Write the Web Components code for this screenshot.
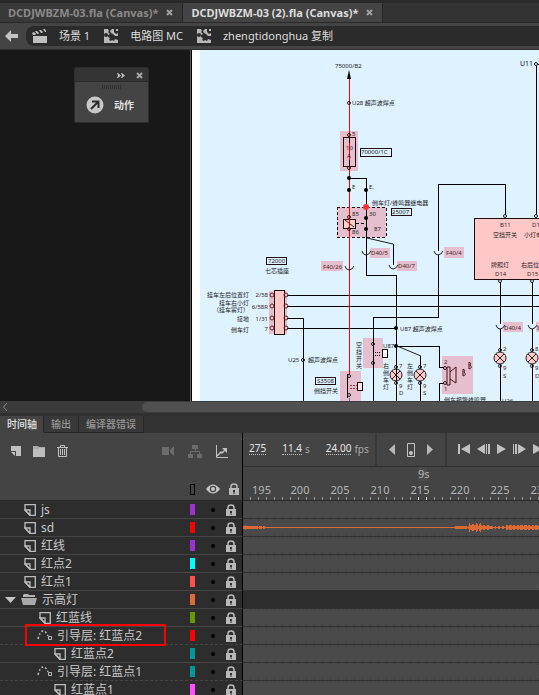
<!DOCTYPE html>
<html lang="zh-CN">
<head>
<meta charset="utf-8">
<title>DCDJWBZM-03 (2).fla (Canvas)</title>
<style>
html, body { height: 100%; margin: 0; }
body { background: #2d2d2d; color: #d6d6d6; overflow: hidden; font-family: "Noto Sans", "Noto Sans CJK SC", sans-serif; }
</style>
</head>
<body>
<animate-app></animate-app>
<script>
const RESET = `
*, *::before, *::after { box-sizing: border-box; }
button { appearance: none; background: none; border: 0; padding: 0; margin: 0; color: inherit; font: inherit; display: flex; align-items: center; justify-content: center; }
svg { display: block; }
`;
function define(name, css, html) {
  customElements.define(name, class extends HTMLElement {
    constructor() {
      super();
      this.attachShadow({ mode: 'open' });
    }
    connectedCallback() {
      const body = typeof html === 'function' ? html(this) : html;
      this.shadowRoot.innerHTML = `<style>${RESET}${css}</style>${body}`;
    }
  });
}

/* ---------- icons ---------- */
const ICONS = {
  back: [13, 12, '<path fill="#c4c4c4" d="M0 6 6 0V4H13V8H6V12Z"/>'],
  clapper: [15, 15, '<path fill="#c0c0c0" d="M1 7H15V14H1Z"/><path fill="#c0c0c0" d="M0 4 2 3 4 5 3 6 1 6ZM3 2 5 2 7 4 6 5 5 5ZM7 1 9 1 11 3 10 4 9 4ZM11 0 13 0 14 2 14 3 13 3Z"/>'],
  symbol: [14, 14, '<path fill="#b8b8b8" d="M0 0H4L5 2 4 3 6 5 4 6V8L6 9 5 11 7 12 8 11 10 12 11 10 14 11V14H0Z"/><path fill="#b8b8b8" d="M8 0H10L10 3 12 5 14 4V7L11 7 9 5 7 4 6 2Z"/><circle cx="2" cy="6" r="2" fill="#2b2b2b"/><path fill="#b8b8b8" d="M12 0H14V2H12Z"/>'],
  close: [7, 7, '<path stroke="currentColor" stroke-width="2" d="M1 1 6 6M6 1 1 6"/>'],
  expand: [8, 5, '<path fill="#bdbdbd" d="M0 0H1L4 2.500 1 5H0L1 2.500ZM4 0H5L8 2.500 5 5H4L5 2.500Z"/>'],
  actions: [18, 18, '<circle cx="9" cy="9" r="8.500" fill="#c8c8c8"/><path fill="none" stroke="#2c2c2c" stroke-width="2" d="M5 13 12 6M6 5.500H12.500V12"/>'],
  newlayer: [10, 10, '<path fill="#c0c0c0" d="M0 0H10V10H5V5H0Z"/><path fill="#c0c0c0" d="M0 6H4V10Z"/>'],
  newfolder: [12, 11, '<path fill="#aaa" d="M0 0H5L6 1H12V2H5L4 3H0Z"/><path fill="#bdbdbd" d="M0 3H4L5 2H12V11H0Z"/>'],
  trash: [11, 12, '<path fill="none" stroke="#c0c0c0" d="M0 2.500H11M3.500 2V.5H7.500V2M1.500 3V11.500H9.500V3M3.500 4V10M5.500 4V10M7.500 4V10"/>'],
  camera: [12, 10, '<path fill="#6c6c6c" d="M0 1H7V9H0ZM8 4 12 0V10L8 6Z"/>'],
  tree: [14, 13, '<path fill="#6c6c6c" d="M4 0H10V4H4ZM0 9H5V13H0ZM9 9H14V13H9Z"/><path fill="none" stroke="#6c6c6c" d="M7.500 4V6.500M2.500 9V6.500H11.500V9"/>'],
  graph: [12, 13, '<path fill="none" stroke="#c0c0c0" d="M.5 0V12.500H12"/><path fill="none" stroke="#c0c0c0" stroke-width="1.500" d="M1 11 5 7 6 8 10 4"/><path fill="#c0c0c0" d="M6 3H11V8Z"/>'],
  eye: [14, 10, '<path fill="#c6c6c6" d="M0 5Q7-4 14 5 7 14 0 5Z"/><circle cx="7" cy="5" r="3.200" fill="#444"/><circle cx="7" cy="5" r="2" fill="#c6c6c6"/>'],
  lock: [10, 12, '<path fill="none" stroke="#b9b9b9" stroke-width="1.500" d="M2 6V3.500Q2 1 5 1T8 3.500V6"/><path fill="#b9b9b9" d="M0 5H10V12H0Z"/><path fill="#333" d="M4 7H6V9H5.500V11H4.500V9H4Z"/>'],
  layer: [12, 12, '<path fill="none" stroke="#bdbdbd" stroke-width="1.300" d="M1 6V.7H11.300V11.300H6Z"/><path fill="none" stroke="#bdbdbd" stroke-width="1.300" d="M1 6H6V11.300Z"/>'],
  folder: [16, 11, '<path fill="#b4b4b4" d="M2 3V1L3 0H7L8 1H14V3Z"/><path fill="#a9a9a9" d="M0 4H16L14 11H2Z"/>'],
  guide: [15, 11, '<path fill="none" stroke="#bdbdbd" stroke-width="1.500" stroke-dasharray="2 2" d="M1 9Q3 1 6 1T11 6"/><path fill="none" stroke="#bdbdbd" d="M11.500 6.500H14.500V9.500H11.500Z"/>'],
  caret: [11, 6, '<path fill="#c4c4c4" d="M0 0H11L5.500 6Z"/>'],
  chevron: [4, 8, '<path fill="none" stroke="#858585" d="M4 0 .5 4 4 8"/>'],
  prev: [6, 11, '<path fill="#b8b8b8" d="M6 0V11L0 5.500Z"/>'],
  next: [6, 11, '<path fill="#b8b8b8" d="M0 0V11L6 5.500Z"/>'],
  key: [8, 14, '<path fill="none" stroke="#c4c4c4" d="M.5.5H7.500V13.500H.5Z"/><circle cx="4" cy="10" r="2" fill="#c4c4c4"/>'],
  first: [12, 10, '<path fill="#c0c0c0" d="M0 0H2V10H0ZM12 0V10L3 5Z"/>'],
  stepback: [13, 10, '<path fill="#c0c0c0" d="M8 0V10L0 5ZM9 0H10V10H9ZM11 0H13V10H11Z"/>'],
  play: [9, 10, '<path fill="#c0c0c0" d="M0 0 9 5 0 10Z"/>'],
  stepnext: [13, 10, '<path fill="#c0c0c0" d="M0 0H1V10H0ZM2 0H4V10H2ZM5 0 13 5 5 10Z"/>'],
  last: [12, 10, '<path fill="#c0c0c0" d="M0 0 9 5 0 10ZM10 0H12V10H10Z"/>']
};
define('app-icon', ':host{display:block;flex:none}', el => {
  const [w, h, art] = ICONS[el.getAttribute('name')];
  return `<svg width="${w}" height="${h}" viewBox="0 0 ${w} ${h}" aria-hidden="true">${art}</svg>`;
});

/* ---------- document tabs ---------- */
define('doc-tab', `
:host{display:flex;align-items:center;height:19px;padding:0 9px 0 8px;gap:8px;background:#393939;color:#8c8989;border-right:1px solid #262626;font-weight:700;font-size:11px;line-height:19px;white-space:nowrap}
:host([active]){background:#444;color:#dcdcdc}
button{color:#a0a0a0}`,
`<span><slot></slot></span><button aria-label="关闭"><app-icon name="close"></app-icon></button>`);
define('doc-tabs', ':host{display:flex;background:#333;border-top:3px solid #292929;border-bottom:1px solid #292929;height:23px;overflow:hidden}', '<slot></slot>');

/* ---------- breadcrumb ---------- */
define('crumb-item', `
:host{display:flex;align-items:center;gap:12px;font-size:11px;color:#dedede;white-space:nowrap}
a{color:inherit;text-decoration:none;line-height:20px}`,
el => `<app-icon name="${el.getAttribute('icon')}"></app-icon><a href="#"><slot></slot></a>`);
define('crumb-bar', `
:host{display:flex;align-items:center;height:27px;gap:8px;padding-left:5px;background:#444;border-bottom:1px solid #303030}
nav{display:flex;flex:1;align-items:center;gap:14px;height:20px;padding-left:6px;background:#2b2b2b;border-radius:8px 0 0 8px}`,
`<button aria-label="返回"><app-icon name="back"></app-icon></button><nav><slot></slot></nav>`);

/* ---------- floating actions panel ---------- */
define('actions-panel', `
:host{display:block;width:75px;background:#444;border:1px solid #2c2c2c;border-radius:3px 3px 0 0}
header{display:flex;align-items:center;justify-content:flex-end;gap:11px;height:14px;padding:1px 5px 0 0;background:#343434;border-bottom:1px solid #2a2a2a;color:#a6a6a6}
.grip{width:19px;height:4px;margin:3px auto 7px;background:repeating-linear-gradient(90deg,#303030 0 1px,transparent 1px 2px)}
.act{gap:10px;padding:0 0 8px 11px;font-size:10px;font-weight:700;color:#e2e2e2;line-height:18px}`,
`<header><button aria-label="展开"><app-icon name="expand"></app-icon></button><button aria-label="关闭"><app-icon name="close"></app-icon></button></header>
<div class="grip"></div><button class="act"><app-icon name="actions"></app-icon><span>动作</span></button>`);

/* ---------- circuit drawing ---------- */
const T = (x, y, s, o = '') => `<text x="${x}" y="${y}" ${o}>${s}</text>`;
const V = (x, ys, s) => [...s].map((c, i) => T(x, ys[i], c)).join('');
const L = (d, o = '') => `<path class="w" d="${d}" ${o}/>`;
const P = (x, y, w, h) => `<rect class="p" x="${x}" y="${y}" width="${w}" height="${h}"/>`;
const B = (x, y, w, h, o = 'fill="none"') => `<rect class="b" x="${x}" y="${y}" width="${w}" height="${h}" ${o}/>`;
const O = (x, y) => `<circle class="o" cx="${x}" cy="${y}" r="1.500"/>`;
const D = (x, y) => `<circle cx="${x}" cy="${y}" r="2"/>`;
const CUP = (x, y) => `<path class="c" d="M${x - 4} ${y - 2}Q${x - 3} ${y + 2} ${x} ${y + 2}T${x + 5} ${y - 2}"/>`;
const LAMP = (x, y) => `<circle cx="${x}" cy="${y}" r="6" fill="#ffc8c8" stroke="#222"/><path class="c" d="M${x - 4} ${y - 4}L${x + 4} ${y + 4}M${x + 4} ${y - 4}L${x - 4} ${y + 4}"/>${O(x, y - 8)}${O(x, y + 8)}`;
const drawing = [
  P(340,131,18,40), P(337,207,49,30), P(370,248,20,10), P(397,261,20,10), P(444,247,20,11), P(321,261,22,10),
  P(269,291,18,43), P(340,371,21,30), P(363,338,20,30), P(442,356,31,38), P(503,322,20,10), P(536,322,20,10),
  B(474,218,160,61,'fill="#ffc8c8"'), B(274,290,10,44,'fill="#ffc8c8"'),
  L('M349 178H366V275H396V401'), L('M438 251V184H505V215'), L('M438 255V317H373V401'), L('M536 66V215'), L('M538 64H560'),
  L('M500 282V324M500 329V401M532 282V324M532 329V401'), L('M287 295H900M287 306H900M287 318H303V401M287 328H396'),
  L('M396 346H439V367H444M444 383H439V401'), L('M393 244V265'),
  '<path class="c" d="M367 238 393 244M397 346 421 356"/>', L('M420 356V401'),
  B(337,207,49,30,'fill="none" stroke-dasharray="3 2"'), B(343,219,12,9,'fill="#ffd2cb"'), '<path class="c" d="M345 220 354 227"/>',
  L('M356 223H366','stroke-dasharray="3 2"'),
  B(343,137,12,29),
  '<path class="r" d="M349 78V374"/>', L('M349 137V143M349 160V166'), '<path class="w" style="stroke:#3980bd" d="M349 398V401"/>',
  '<path d="M349 70 347 79H351Z"/>',
  T(335,68,'75000/B2'), O(349,103), T(352,105,'U28 超声波焊点'),
  O(349,135), O(349,168), T(352,136,'5'), T(346,150,'10'), T(347,158,'A'),
  B(360,148,31,8), T(361,154,'70000/1C'), D(349,178), D(349,190), D(366,190), T(352,189,'E'), T(369,189,'E.'),
  T(352,216,'85'), T(369,216,'30'), T(352,234,'86'), T(374,231,'87'),
  O(349,217), O(349,229), D(366,218), D(366,229), '<circle cx="366" cy="207" r="3" fill="#f33"/>',
  T(372,205,'倒车灯/蜂鸣器继电器'), B(391,208,20,7), T(392,214,'25007'),
  CUP(366,253), CUP(393,267), CUP(438,253), CUP(349,268), CUP(500,327), CUP(532,327),
  T(371,255,'D40/5','class="m"'), T(398,268,'D40/7','class="m"'), T(446,255,'F40/4','class="m"'), T(323,269,'F40/26','class="m"'), T(504,330,'D40/4','class="m"'), T(537,330,'D40/4','class="m"'),
  T(520,66,'U11','font-size="7"'), O(536,64), O(505,216), O(536,216), O(500,281), O(532,281),
  T(500,227,'B11','class="m"'), T(493,237,'空挡开关'), T(532,227,'D10','class="m"'), T(524,237,'小灯电源'),
  T(491,267,'牌照灯'), T(495,276,'D14','class="m"'), T(521,267,'右后位置灯'), T(527,276,'D15','class="m"'),
  B(266,257,20,7), T(268,263,'72000'), T(265,273,'七芯插座'),
  ...[295,306,318,328].flatMap(y => [`<circle cx="272" cy="${y}" r="2" fill="none" stroke="#622"/>`, `<circle cx="286" cy="${y}" r="2" fill="none" stroke="#622"/>`]),
  T(249,297,'挂车左后位置灯','class="e"'), T(249,305,'挂车右小灯','class="e"'), T(249,312,'（挂车雾灯）','class="e"'), T(249,321,'接地','class="e"'), T(249,332,'倒车灯','class="e"'),
  T(268,297,'2/58','class="e m"'), T(268,309,'6/58R','class="e m"'), T(268,321,'1/31','class="e m"'), T(268,331,'7','class="e m"'),
  T(288,362,'U25'), O(303,360), T(308,362,'超声波焊点'),
  B(315,377,20,7), T(317,383,'S3508'), T(314,393,'倒挡开关'),
  L('M347 374V398M373 343V364'), O(349,376), O(349,395), L('M350 385H357M350 388H357','stroke-dasharray="2 1" style="stroke:#933"'), B(357,382,5,8,'fill="#ffe4e4"'),
  V(356,[347,354,361,368],'空挡开关'), O(373,344), O(373,363), L('M375 352H381M375 355H381','stroke-dasharray="1 1"'), B(382,349,5,8,'fill="#fff"'),
  D(396,328), T(400,331,'U87 超声波焊点'), T(383,348,'U87'), D(396,346),
  LAMP(396,375), LAMP(420,375), LAMP(500,358), LAMP(532,358), L('M396 369V382'),
  V(383,[368,375,382,389],'右倒车灯'), V(407,[368,375,382,389],'左倒车灯'),
  T(399,368,'7','class="m"'), T(399,388,'9','class="m"'), T(399,395,'D','class="m"'), T(423,368,'7','class="m"'), T(423,388,'9','class="m"'), T(423,395,'S','class="m"'),
  T(503,351,'2','class="m"'), T(503,370,'9','class="m"'), T(503,378,'S','class="m"'), T(535,351,'8','class="m"'), T(535,370,'9','class="m"'), T(535,378,'D','class="m"'),
  T(444,364,'2','class="m"'), T(444,391,'1','class="m"'), O(445,368), O(445,383),
  '<path class="c" style="stroke:#411" d="M447 367H450V385H447ZM450 372 456 367V383L450 379M463 369V376M463 369Q466 370 464 372 467 375 463 376M469 362V369M469 362Q472 363 470 365 473 368 469 369"/>',
  T(444,402,'倒车报警蜂鸣器'), T(502,403,'U26')
].join('');
define('circuit-stage', `
:host{display:flex;position:relative;height:351px;background:#181818;overflow:hidden}
.paste{flex:none;width:191px;border-right:1px solid #5a5a5a}
.doc{flex:1;min-width:0;overflow:hidden;padding-left:8px;background:#fff;border-left:1px solid #000}
.doc svg{background:#def2ff}
.float{position:absolute;left:74px;top:17px}
text{font:6px "Noto Sans","Noto Sans CJK SC",sans-serif;fill:#222}
text[font-size="7"]{font-size:7px}
.e{text-anchor:end}
.m{fill:#422}
.w{fill:none;stroke:#000;stroke-width:1px;shape-rendering:crispEdges}
.r{fill:none;stroke:#f00;stroke-width:1px;shape-rendering:crispEdges}
.b{stroke:#200c0c;stroke-width:1px;shape-rendering:crispEdges}
.c{fill:none;stroke:#222;stroke-width:1px}
.o{fill:none;stroke:#222;stroke-width:1px}
.p{fill:#e6bfce}`,
`<div class="paste"></div><div class="doc"><svg width="700" height="351" viewBox="200 50 700 351" role="img" aria-label="电路图">${drawing}</svg></div><div class="float"><slot></slot></div>`);

/* ---------- scroll strip ---------- */
define('scroll-strip', `
:host{display:flex;align-items:center;height:15px;padding-left:3px;background:#3b3b3b;border-bottom:3px solid #303030}
.track{flex:1;padding-left:135px}.thumb{height:10px;background:#505050;border-radius:5px 0 0 5px}`,
`<button aria-label="向左滚动"><app-icon name="chevron"></app-icon></button><div class="track"><div class="thumb"></div></div>`);

/* ---------- panel tabs ---------- */
define('panel-tabs', `
:host{display:flex;height:17px;background:#333}
button{padding:0 7px;border-right:1px solid #272727;border-bottom:1px solid #272727;background:#393939;color:#969696;font-size:10px;font-weight:500;line-height:16px}
button.on{padding:0 6px 0 7px;background:#444;color:#e2e2e2;border-bottom-color:#444}`,
el => el.getAttribute('items').split(',').map((t, i) => `<button class="${i ? '' : 'on'}">${t}</button>`).join(''));

/* ---------- timeline head ---------- */
define('layer-tools', `
:host{display:flex;flex-direction:column;justify-content:space-between;width:243px;height:68px;background:#444;border-right:1px solid #000;border-bottom:1px solid #2a2a2a}
.row{display:flex;align-items:center}
.top{height:36px;padding:0 14px 0 11px;gap:12px}
.sp{flex:1}.end{gap:14px;display:flex}
.cols{padding:0 5px 5px 190px;gap:9px}
.cols button:nth-child(2){margin-left:2px}
.outline{width:5px;height:11px;border:1px solid #000}`,
`<div class="row top"><button aria-label="新建图层"><app-icon name="newlayer"></app-icon></button><button aria-label="新建文件夹"><app-icon name="newfolder"></app-icon></button><button aria-label="删除"><app-icon name="trash"></app-icon></button><span class="sp"></span><span class="end"><button aria-label="摄像头"><app-icon name="camera"></app-icon></button><button aria-label="图层父级"><app-icon name="tree"></app-icon></button><button aria-label="图层深度"><app-icon name="graph"></app-icon></button></span></div>
<div class="row cols"><button aria-label="轮廓"><span class="outline"></span></button><button aria-label="可见"><app-icon name="eye"></app-icon></button><button aria-label="锁定"><app-icon name="lock"></app-icon></button></div>`);

define('play-bar', `
:host{display:flex;align-items:stretch;height:34px;background:#444;border-bottom:1px solid #303030;font-size:10px;overflow:hidden;white-space:nowrap}
div{display:flex;align-items:center;flex:none}
.vals{width:132px;padding-left:6px;gap:16px;padding-bottom:2px}
.vals b{font-weight:400;color:#e6e6e6;border-bottom:1px dotted #c0c0c0;line-height:11px}
.vals span{display:flex;gap:3px;line-height:12px;color:#aaa}
.keys{width:70px;border-left:2px solid #383838;justify-content:center;gap:12px}
.play{border-left:2px solid #383838;padding:0 0 2px 11px;gap:7px}`,
`<div class="vals"><span><b>275</b></span><span><b>11.4</b>s</span><span><b>24.00</b>fps</span></div>
<div class="keys"><button aria-label="上一关键帧"><app-icon name="prev"></app-icon></button><button aria-label="插入关键帧"><app-icon name="key"></app-icon></button><button aria-label="下一关键帧"><app-icon name="next"></app-icon></button></div>
<div class="play">${['first','stepback','play','stepnext','last'].map(n => `<button aria-label="${n}"><app-icon name="${n}"></app-icon></button>`).join('')}</div>`);

define('frame-ruler', `
:host{display:flex;flex-direction:column;justify-content:flex-end;height:34px;overflow:hidden;background:#444;border-bottom:1px solid #2a2a2a;font-size:11px;color:#b5b5b5}
.sec{padding-left:175px;line-height:14px;height:16px}
.sec span{display:block;width:9px;background:#4b4b4b;white-space:nowrap}
.nums{display:flex;line-height:14px;height:14px}
.nums span{flex:none;width:40px;text-align:center}
.nums span:first-child{width:37px}
.ticks{height:3px;background:linear-gradient(90deg,transparent 175px,#fff 175px 176px,transparent 176px 183px,#fff 183px 184px,transparent 184px),repeating-linear-gradient(90deg,transparent 0 7px,#8a9490 7px 8px)}`,
`<div class="sec"><span>9s</span></div><div class="nums">${[195,200,205,210,215,220,225,230].map(n => `<span>${n}</span>`).join('')}</div><div class="ticks"></div>`);

/* ---------- layer rows ---------- */
function wave() {
  const amp = x => x < 22 ? 1.8 - x / 20 : x < 212 ? 0 : x < 226 ? 1.5 : x < 238 ? 3.6 : x < 248 ? 2 : x < 263 ? .6 : x < 300 ? 2.4 : 1;
  let d = '';
  for (let x = 0; x < 600; x++) {
    const a = Math.round(amp(x) * (0.3 + 0.7 * Math.abs(Math.sin(x * 2.3))));
    d += `M${x} ${8 - a}h1V${9 + a}h-1Z`;
  }
  return `<svg width="600" height="17" viewBox="0 0 600 17"><path d="${d}" fill="#dc6a35"/></svg>`;
}
define('layer-row', `
:host{display:grid;grid-template-columns:243px 1fr;height:18px;font-size:12px;line-height:17px;color:#c9c9c9}
.head{display:flex;align-items:center;background:#2d2d2d;border-right:1px solid #000;border-bottom:1px solid #454545}
:host([guide]) .head{border-bottom-style:dashed}
.name{display:flex;align-items:center;flex:1;gap:5px;white-space:nowrap}
.sw{width:5px;height:11px}
.dot{width:4px;height:4px;border-radius:2px;background:#000}
.vis{margin:0 11px 0 16px}
.lk{margin-right:6px}
.frames{overflow:hidden;border-bottom:1px solid #303030;background:repeating-linear-gradient(90deg,transparent 0 7px,#404040 7px 8px) 0 0/auto 2px repeat-x,repeating-linear-gradient(90deg,transparent 0 7px,#404040 7px 8px) 0 100%/auto 2px repeat-x,#4a4a4a}
:host([kind=folder]) .frames{background:#2d2d2d}`,
el => {
  const k = el.getAttribute('kind') || 'layer';
  const pad = el.getAttribute('indent');
  return `<div class="head"><div class="name" style="padding-left:${pad}px">${k === 'folder' ? '<button aria-label="折叠"><app-icon name="caret"></app-icon></button>' : ''}<app-icon name="${k}"></app-icon><span><slot></slot></span></div>
<button aria-label="轮廓颜色"><span class="sw" style="background:${el.getAttribute('color')}"></span></button><button class="vis" aria-label="可见"><span class="dot"></span></button><button class="lk" aria-label="锁定"><app-icon name="lock"></app-icon></button></div><div class="frames">${el.hasAttribute('audio') ? wave() : ''}</div>`;
});
define('layer-list', `
:host{display:block;position:relative}
.mark{position:absolute;left:25px;top:123px;width:141px;height:22px;border:2px solid #f00}`,
'<slot></slot><div class="mark"></div>');

define('time-line', `
:host{display:block}
.top{display:grid;grid-template-columns:243px minmax(0,1fr)}`,
`<panel-tabs items="时间轴,输出,编译器错误"></panel-tabs>
<div class="top"><layer-tools></layer-tools><div><play-bar></play-bar><frame-ruler></frame-ruler></div></div><slot></slot>`);

define('animate-app', ':host{display:flex;flex-direction:column;height:100%;overflow:hidden}doc-tabs,crumb-bar,circuit-stage,scroll-strip,time-line{flex:none}', `
<doc-tabs><doc-tab>DCDJWBZM-03.fla (Canvas)*</doc-tab><doc-tab active>DCDJWBZM-03 (2).fla (Canvas)*</doc-tab></doc-tabs>
<crumb-bar><crumb-item icon="clapper">场景 1</crumb-item><crumb-item icon="symbol">电路图 MC</crumb-item><crumb-item icon="symbol">zhengtidonghua 复制</crumb-item></crumb-bar>
<circuit-stage><actions-panel></actions-panel></circuit-stage>
<scroll-strip></scroll-strip>
<time-line><layer-list>
<layer-row indent="24" color="#9933cc">js</layer-row>
<layer-row indent="24" color="#ff0000" audio>sd</layer-row>
<layer-row indent="24" color="#9933cc">红线</layer-row>
<layer-row indent="24" color="#00ffff">红点2</layer-row>
<layer-row indent="24" color="#ff4f4f">红点1</layer-row>
<layer-row indent="5" kind="folder" color="#e06a35">示高灯</layer-row>
<layer-row indent="39" color="#669900">红蓝线</layer-row>
<layer-row indent="37" kind="guide" guide color="#ff0000">引导层: 红蓝点2</layer-row>
<layer-row indent="54" color="#009999">红蓝点2</layer-row>
<layer-row indent="37" kind="guide" guide color="#009999">引导层: 红蓝点1</layer-row>
<layer-row indent="54" color="#ff4fff">红蓝点1</layer-row>
</layer-list></time-line>`);
</script>
</body>
</html>
